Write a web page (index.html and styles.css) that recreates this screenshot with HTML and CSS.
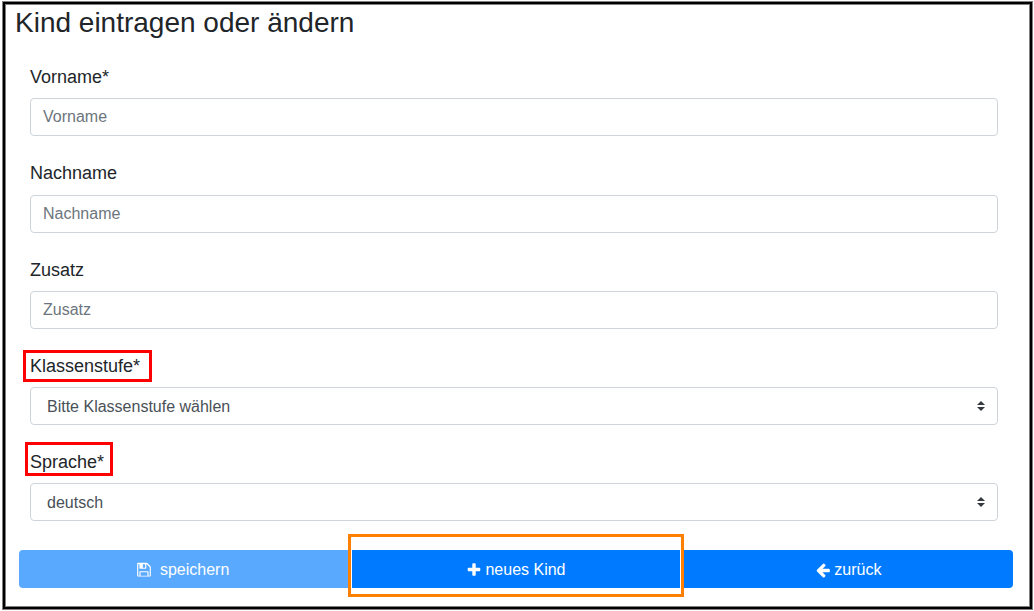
FILE: index.html
```html
<!DOCTYPE html>
<html lang="de">
<head>
<meta charset="utf-8">
<meta name="viewport" content="width=device-width, initial-scale=1">
<title>Kind eintragen oder ändern</title>
<link rel="stylesheet" href="styles.css">
</head>
<body>
<main class="frame">
  <h1 class="title">Kind eintragen oder ändern</h1>
  <form class="form">
    <div class="fields">
      <div class="field">
        <label class="label" for="vorname">Vorname*</label>
        <input class="control" id="vorname" type="text" placeholder="Vorname">
      </div>
      <div class="field">
        <label class="label" for="nachname">Nachname</label>
        <input class="control" id="nachname" type="text" placeholder="Nachname">
      </div>
      <div class="field">
        <label class="label" for="zusatz">Zusatz</label>
        <input class="control" id="zusatz" type="text" placeholder="Zusatz">
      </div>
      <div class="field">
        <label class="label marked marked-class" for="klassenstufe">Klassenstufe*</label>
        <div class="select-wrap">
          <select class="control select" id="klassenstufe"><option>Bitte Klassenstufe wählen</option></select>
          <svg class="caret" viewBox="0 0 4 5" aria-hidden="true"><path d="M2 0L0 2h4zm0 5L0 3h4z"/></svg>
        </div>
      </div>
      <div class="field">
        <label class="label marked marked-language" for="sprache">Sprache*</label>
        <div class="select-wrap">
          <select class="control select" id="sprache"><option>deutsch</option></select>
          <svg class="caret" viewBox="0 0 4 5" aria-hidden="true"><path d="M2 0L0 2h4zm0 5L0 3h4z"/></svg>
        </div>
      </div>
    </div>
    <div class="actions">
      <div class="cell">
        <button class="button button-save" type="submit" disabled>
          <svg class="icon" viewBox="0 0 1792 1792" aria-hidden="true"><path d="M512 1536h768v-384h-768v384zm896 0h128v-896q0-14-10-38.5t-20-34.5l-281-281q-10-10-34-20t-39-10v416q0 40-28 68t-68 28h-576q-40 0-68-28t-28-68v-416h-128v1280h128v-416q0-40 28-68t68-28h832q40 0 68 28t28 68v416zm-384-928v-320q0-13-9.5-22.5t-22.5-9.5h-192q-13 0-22.5 9.5t-9.5 22.5v320q0 13 9.5 22.5t22.5 9.5h192q13 0 22.5-9.5t9.5-22.5zm640 32v896q0 40-28 68t-68 28h-1344q-40 0-68-28t-28-68v-1344q0-40 28-68t68-28h928q40 0 88 20t84 48l280 280q28 28 48 76t20 88z"/></svg>
          <span>speichern</span>
        </button>
      </div>
      <div class="cell cell-marked">
        <button class="button" type="button">
          <svg class="icon" viewBox="0 0 1792 1792" aria-hidden="true"><path d="M1600 736v192q0 40-28 68t-68 28h-416v416q0 40-28 68t-68 28h-192q-40 0-68-28t-28-68v-416h-416q-40 0-68-28t-28-68v-192q0-40 28-68t68-28h416v-416q0-40 28-68t68-28h192q40 0 68 28t28 68v416h416q40 0 68 28t28 68z"/></svg>
          <span>neues Kind</span>
        </button>
      </div>
      <div class="cell">
        <button class="button button-back" type="button">
          <svg class="icon" viewBox="0 0 1792 1792" aria-hidden="true"><path d="M1664 896v128q0 53-32.5 90.5t-84.5 37.5h-704l293 294q38 36 38 90t-38 90l-75 76q-37 37-90 37-52 0-91-37l-651-652q-37-37-37-90 0-52 37-91l651-650q38-38 91-38 52 0 90 38l75 74q38 38 38 91t-38 91l-293 293h704q52 0 84.5 37.5t32.5 90.5z"/></svg>
          <span>zurück</span>
        </button>
      </div>
    </div>
  </form>
</main>
</body>
</html>
```

FILE: styles.css
```css
* {
  box-sizing: border-box;
}

body {
  margin: 0;
  background: #fff;
  color: #212529;
  font-family: "Liberation Sans", Arial, sans-serif;
  font-size: 16px;
  line-height: 24px;
}

.frame {
  display: flow-root;
  min-height: calc(100vh - 2px);
  margin: 1px 1px 0 2px;
  padding: 3px;
  border: 1px solid #808080;
  box-shadow: inset 0 0 0 2px #000, inset 0 0 0 3px #808080;
}

.title {
  margin: 0;
  padding-left: 9px;
  font-size: 28px;
  font-weight: 400;
  line-height: 36px;
}

.form {
  padding: 24px 16px 0 13px;
}

.fields {
  padding: 0 15px 4px 11px;
}

.field {
  display: flex;
  flex-direction: column;
  align-items: flex-start;
  gap: 9px;
  margin-bottom: 25px;
}

.label {
  position: relative;
  font-size: 18px;
  line-height: 1.35;
}

.marked::after {
  content: "";
  position: absolute;
  border: 3px solid #f00;
  pointer-events: none;
}

.marked-class::after {
  inset: -4px -12px -4px -7px;
}

.marked-language::after {
  inset: -8px -9px -2px -5px;
}

.control {
  display: block;
  width: 100%;
  height: 38px;
  margin: 0;
  padding: 6px 12px;
  border: 1px solid #ced4da;
  border-radius: 4px;
  background: #fff;
  color: #495057;
  font: inherit;
}

.control::placeholder {
  color: #6c757d;
  opacity: 1;
}

.select-wrap {
  position: relative;
  width: 100%;
}

.select {
  padding: 7px 28px 5px 16px;
  appearance: none;
}

.caret {
  position: absolute;
  top: 14px;
  right: 13px;
  width: 8px;
  height: 10px;
  fill: #343a40;
  pointer-events: none;
}

.actions {
  display: grid;
  grid-template-columns: repeat(3, 1fr);
}

.cell-marked {
  position: relative;
}

.cell-marked::after {
  content: "";
  position: absolute;
  inset: -16px -2px -9px;
  border: 3px solid #ff8000;
  box-shadow: inset 1px 0 #fff, inset -1px 0 #fff;
  pointer-events: none;
}

.button {
  display: flex;
  justify-content: center;
  align-items: center;
  gap: 3px;
  width: 100%;
  height: 38px;
  padding: 2px 12px 0;
  border: 0;
  background: #007bff;
  color: #fff;
  font: inherit;
}

.button-save {
  gap: 8px;
  padding-right: 16px;
  border-radius: 4px 0 0 4px;
  background: #59a9ff;
}

.button-back {
  padding-left: 14px;
  border-radius: 0 4px 4px 0;
}

.icon {
  width: 16px;
  height: 16px;
  fill: currentColor;
}
```
